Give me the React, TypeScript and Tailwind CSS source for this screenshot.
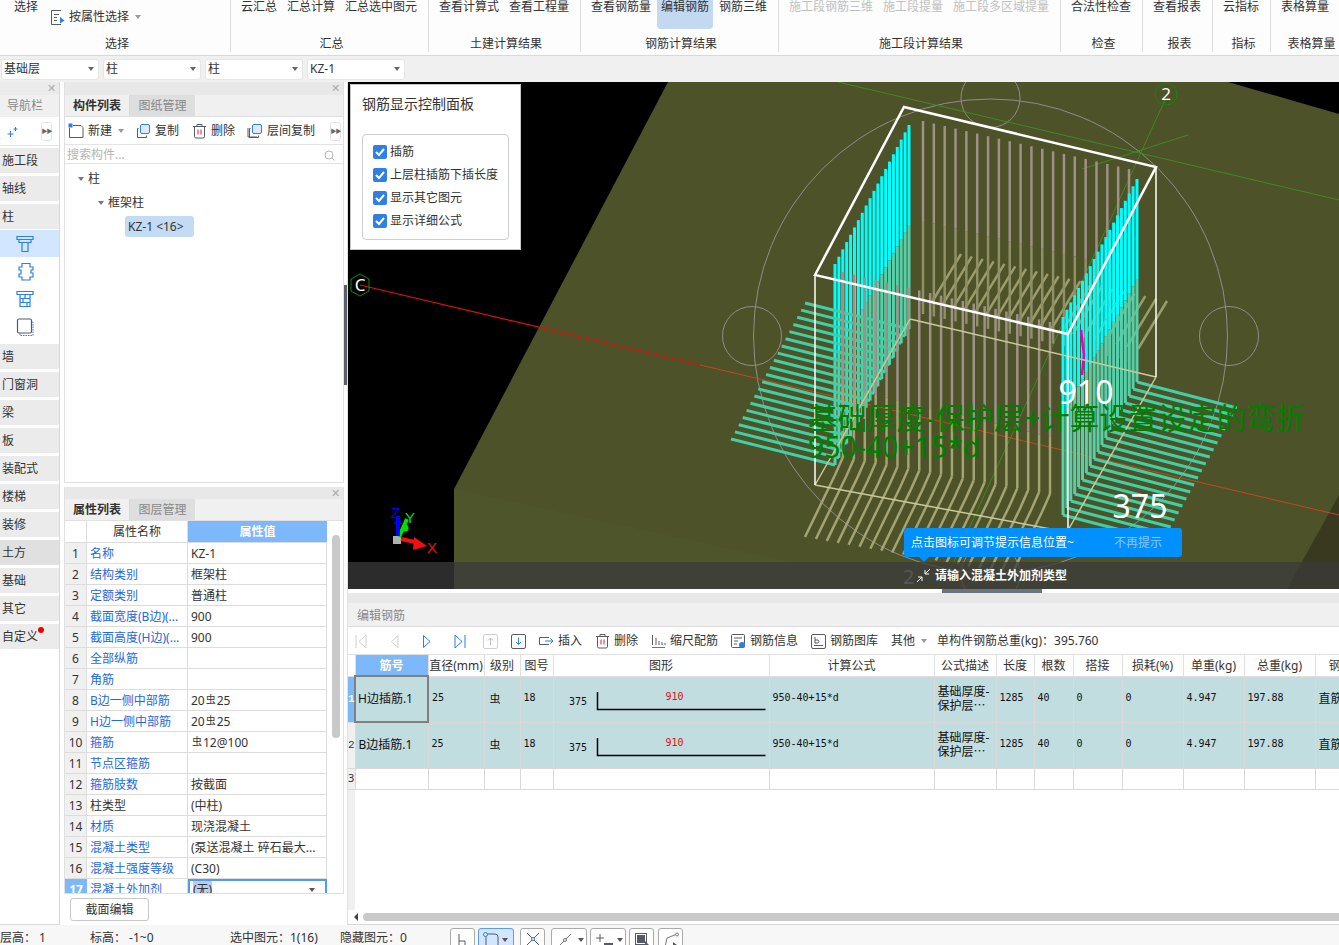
import React from 'react';

const ribbon = [
  { w: 'w-[231px]', label: '选择', pl: 'pl-[14px]', lp: 'pl-[4px]', items: [] as string[] },
  { w: 'w-[198px]', label: '汇总', pl: 'pl-[10px]', lp: 'pl-[4px]', items: ['云汇总', '汇总计算', '汇总选中图元'] },
  { w: 'w-[152px]', label: '土建计算结果', pl: 'pl-[10px]', lp: 'pl-[3px]', items: ['查看计算式', '查看工程量'] },
  { w: 'w-[198px]', label: '钢筋计算结果', pl: 'pl-[10px]', lp: 'pl-[3px]', items: ['查看钢筋量', '编辑钢筋', '钢筋三维'] },
  { w: 'w-[282px]', label: '施工段计算结果', pl: 'pl-[10px]', lp: 'pl-[3px]', items: ['施工段钢筋三维', '施工段提量', '施工段多区域提量'] },
  { w: 'w-[82px]', label: '检查', pl: 'pl-[10px]', lp: 'pl-[4px]', items: ['合法性检查'] },
  { w: 'w-[70px]', label: '报表', pl: 'pl-[10px]', lp: 'pl-[4px]', items: ['查看报表'] },
  { w: 'w-[58px]', label: '指标', pl: 'pl-[10px]', lp: 'pl-[4px]', items: ['云指标'] },
  { w: 'w-[68px]', label: '表格算量', pl: 'pl-[10px]', lp: 'pl-[13px]', items: ['表格算量'] },
];

const props: [string, string, boolean][] = [
  ['名称', 'KZ-1', true],
  ['结构类别', '框架柱', true],
  ['定额类别', '普通柱', true],
  ['截面宽度(B边)(...', '900', true],
  ['截面高度(H边)(...', '900', true],
  ['全部纵筋', '', true],
  ['角筋', '', true],
  ['B边一侧中部筋', '20虫25', true],
  ['H边一侧中部筋', '20虫25', true],
  ['箍筋', '虫12@100', true],
  ['节点区箍筋', '', true],
  ['箍筋肢数', '按截面', true],
  ['柱类型', '(中柱)', false],
  ['材质', '现浇混凝土', true],
  ['混凝土类型', '(泵送混凝土 碎石最大...', true],
  ['混凝土强度等级', '(C30)', true],
];

const navTop = ['施工段', '轴线', '柱'];
const navBottom = ['墙', '门窗洞', '梁', '板', '装配式', '楼梯', '装修', '土方', '基础', '其它', '自定义'];

const colW = [7, 73, 56, 36, 33, 216, 165, 62, 38, 39, 49, 61, 61, 71, 75];
const heads = ['', '筋号', '直径(mm)', '级别', '图号', '图形', '计算公式', '公式描述', '长度', '根数', '搭接', '损耗(%)', '单重(kg)', '总重(kg)', '钢筋归类'];

const lerp = (a: number, b: number, t: number) => a + (b - a) * t;
const idx = Array.from({ length: 20 }, (_, i) => i / 19);

function Caret({ className = 'border-t-[#777]' }: { className?: string }) {
  return <span className={`inline-block w-0 h-0 border-x-[3px] border-x-transparent border-t-[4px] ${className}`} />;
}

function More() {
  return (
    <span className="w-[11px] h-[19px] bg-white border border-[#e4e4e4] rounded-[3px] flex items-center justify-center text-[6px] text-[#666] tracking-[-1px]">
      ▶▶
    </span>
  );
}

function Ic({ children, w = 16, h = 16 }: { children: React.ReactNode; w?: number; h?: number }) {
  return (
    <svg width={w} height={h} viewBox={`0 0 ${w} ${h}`} fill="none" className="shrink-0">
      {children}
    </svg>
  );
}

function CopyIcon({ layered }: { layered?: boolean }) {
  return (
    <Ic>
      {layered && <path d="M1 5v9h9" stroke="#555b66" />}
      <path d="M3.500 5.500h-1v9h9v-2" stroke="#555b66" />
      <rect x="5.500" y="1.500" width="9" height="9" rx="1.500" fill="#dcebff" stroke="#2a7fe8" />
    </Ic>
  );
}

function TrashIcon() {
  return (
    <Ic w={15}>
      <path d="M1 3.500h13M5 3V1.500h5V3" stroke="#555b66" />
      <path d="M2.500 3.500v10a1.500 1.500 0 0 0 1.500 1.500h7a1.500 1.500 0 0 0 1.500-1.500v-10" stroke="#555b66" />
      <path d="M6 6.500v5M9 6.500v5" stroke="#e02020" />
    </Ic>
  );
}

function Sq({ label, dark }: { label: 'up' | 'down'; dark?: boolean }) {
  const c = dark ? '#555b66' : '#cfcfcf';
  return (
    <Ic w={15} h={15}>
      <rect x="0.500" y="0.500" width="14" height="14" rx="1.500" stroke={c} />
      {label === 'up' ? (
        <path d="M7.500 11V4M5 6.500 7.500 4 10 6.500" stroke="#bbb" />
      ) : (
        <path d="M7.500 3.500v7M5 8l2.500 2.500L10 8" stroke="#2a7fe8" />
      )}
    </Ic>
  );
}

function PropValue({ value }: { value: string }) {
  if (!value.includes('虫')) return <>{value}</>;
  const [a, b] = value.split('虫');
  return (
    <span>
      {a}
      <span className="text-[10px] px-[1px] align-[2px]">虫</span>
      {b}
    </span>
  );
}

function Scene() {
  return (
    <svg viewBox="348 82 991 507" width={991} height={507} className="block">
      <rect x="348" y="82" width="991" height="507" fill="#000" />
      <polygon points="668,82 1228,82 1339,114 1339,589 454,589 454,489" fill="#4d5229" />
      <polygon points="454,489 1339,680 1339,589 454,589" fill="#4f552b" />
      <polygon points="1339,495 1339,589 1287,589" fill="#38391f" />

      {/* grid */}
      <circle cx="990.500" cy="336" r="237" stroke="#8e8e8e" fill="none" />
      <circle cx="752" cy="336" r="29.500" stroke="#8e8e8e" fill="none" />
      <circle cx="1229" cy="336" r="29.500" stroke="#8e8e8e" fill="none" />
      <circle cx="990.500" cy="98" r="29.500" stroke="#8e8e8e" fill="none" />
      <circle cx="990.500" cy="574" r="29.500" stroke="#8e8e8e" fill="none" />
      <line x1="838" y1="82" x2="1339" y2="200" stroke="#3f8a22" />
      <line x1="1082" y1="169" x2="1188" y2="135" stroke="#3f8a22" />
      <line x1="1165" y1="100" x2="950" y2="570" stroke="#3f8a22" />
      <line x1="360" y1="285" x2="700" y2="365" stroke="#e01010" strokeWidth="1.200" />
      <line x1="700" y1="365" x2="1339" y2="515" stroke="#c8461e" />
      <polygon points="360,274 369,279 369,291 360,296 351,291 351,279" fill="none" stroke="#0a8a0a" />
      <text x="360" y="291" textAnchor="middle" fontSize="17" fill="#fff" fontFamily="Noto Sans">C</text>
      <circle cx="1166" cy="94" r="11" fill="none" stroke="#0a8a0a" />
      <text x="1166" y="100" textAnchor="middle" fontSize="17" fill="#fff" fontFamily="Noto Sans">2</text>

      {/* back bars */}
      {idx.map((t, i) => {
        const x = lerp(923, 1129, t);
        const top = lerp(121, 169, t);
        const mid = top + 100;
        const by = lerp(302, 349, t);
        return (
          <g key={i}>
            <line x1={x + 9} y1={by} x2={x + 38} y2={by - 48} stroke="#9c9c6c" strokeWidth="2.500" />
            <line x1={x} y1={mid} x2={x} y2={by + 12} stroke="#8f8f68" strokeWidth="2.500" />
            <line x1={x} y1={top} x2={x} y2={mid} stroke="#9f9088" strokeWidth="2.500" />
          </g>
        );
      })}

      {/* left cyan bars */}
      {idx.map((t, i) => {
        const x = lerp(835, 909, t);
        const top = lerp(264, 125, t);
        const mid = lerp(359, 225, t);
        const by = lerp(465, 329, t);
        return (
          <g key={i}>
            <line x1={x} y1={by} x2={x - 104} y2={by - 26} stroke="#3fd0a6" strokeWidth="3" />
            <line x1={x} y1={mid} x2={x} y2={by} stroke="#57cfa8" strokeWidth="3" />
            <line x1={x} y1={top} x2={x} y2={mid} stroke="#00ffff" strokeWidth="3" />
          </g>
        );
      })}

      {/* right feet */}
      {idx.map((t, i) => {
        const x = lerp(1063, 1137, t);
        const by = lerp(515, 382, t);
        return <line key={i} x1={x} y1={by} x2={x + 100} y2={by + 26} stroke="#3fd0a6" strokeWidth="3" />;
      })}

      {/* front bars */}
      {idx.map((t, i) => {
        const x = lerp(843, 1050, t);
        const top = lerp(272, 322, t);
        const mid = top + 115;
        const by = lerp(465, 502, t);
        return (
          <g key={i}>
            <path d={`M${x} ${by - 8} L${x - 8} ${by + 10} L${x - 38} ${by + 72}`} fill="none" stroke="#a3a373" strokeWidth="2.500" />
            <line x1={x} y1={mid} x2={x} y2={by - 8} stroke="#a3a373" strokeWidth="2.500" />
            <line x1={x} y1={top} x2={x} y2={mid} stroke="#9f9088" strokeWidth="2.500" />
          </g>
        );
      })}

      {/* right cyan bars */}
      {idx.map((t, i) => {
        const x = lerp(1063, 1137, t);
        const top = lerp(317, 179, t);
        const mid = lerp(415, 279, t);
        const by = lerp(515, 382, t);
        return (
          <g key={i}>
            <line x1={x} y1={mid} x2={x} y2={by} stroke="#57cfa8" strokeWidth="3" />
            <line x1={x} y1={top} x2={x} y2={mid} stroke="#00ffff" strokeWidth="3" />
          </g>
        );
      })}
      <path d="M1081 330l3 25-2 20" stroke="#e000d0" strokeWidth="2.500" fill="none" />

      {/* column box */}
      <path d="M815 485L1067 532M815 485L910 319M910 319L1156 377M1156 377L1067 532" stroke="#c9c99a" strokeWidth="1.500" fill="none" />
      <path d="M815 275V485M1156 167V377M1068 334V532" stroke="#fff" strokeWidth="1.500" fill="none" />
      <path d="M815 275L904 107L1156 167L1068 334Z" stroke="#fff" strokeWidth="2.500" fill="none" />

      <g fontFamily="Noto Sans, Noto Sans CJK SC">
        <text x="1086" y="404" textAnchor="middle" fontSize="32" fill="#fff">910</text>
        <text x="1140" y="518" textAnchor="middle" fontSize="32" fill="#fff">375</text>
        <text x="808" y="429" fontSize="30" fill="#008000" textLength={497} lengthAdjust="spacingAndGlyphs">基础厚度-保护层+计算设置设定的弯折</text>
        <text x="808" y="458" fontSize="30" fill="#008000" textLength={172} lengthAdjust="spacingAndGlyphs">950-40+15*d</text>
      </g>
      <text x="903" y="584" fontSize="20" fill="#a8a8a8" fontFamily="Noto Sans">2</text>

      {/* axis gizmo */}
      <g>
        <rect x="393" y="536" width="8" height="8" fill="#b0b0b0" />
        <path d="M399 537l8-18" stroke="#00e000" strokeWidth="4" />
        <circle cx="405" cy="528" r="3.500" fill="#00e000" />
        <path d="M398 536v-20" stroke="#0000ff" strokeWidth="4" />
        <path d="M398 517l-4.500 7h9z" fill="#0000ff" />
        <path d="M401 539l14 3" stroke="#f01010" strokeWidth="4" />
        <path d="M427 546l-14 4 1-13z" fill="#f01010" />
        <text x="391" y="518" fontSize="15" fill="#0000ff" fontFamily="Liberation Sans">Z</text>
        <text x="405" y="523" fontSize="15" fill="#00e000" fontFamily="Liberation Sans">Y</text>
        <text x="427" y="553" fontSize="15" fill="#f01010" fontFamily="Liberation Sans">X</text>
      </g>
    </svg>
  );
}

function ShapeCell() {
  return (
    <svg width={216} height={45} className="block">
      <g fontFamily="DejaVu Sans Mono" fontSize="10">
        <text x="15" y="28" fill="#111">375</text>
        <text x="120.500" y="23" textAnchor="middle" fill="#e01010">910</text>
      </g>
      <path d="M43.500 15V32.500H211.500" stroke="#000" strokeWidth="1.500" fill="none" />
    </svg>
  );
}

function RebarRow({ n, name, selected }: { n: number; name: string; selected?: boolean }) {
  const td = 'border-r border-b border-[#d9d9d9] px-[3px] align-middle overflow-hidden whitespace-nowrap';
  const mono = `${td} font-['DejaVu_Sans_Mono',monospace] text-[10px] pb-[3px]`;
  return (
    <tr className="h-[46px] bg-[#c1dde0] text-[#111]">
      <td className={`border-r border-b border-[#d9d9d9] text-center text-[11px] font-['Liberation_Mono',monospace] ${selected ? 'bg-[#7db8fa] text-white font-bold' : 'bg-[#f0f0f0] text-[#333]'}`}>
        {n}
      </td>
      <td className={selected ? 'border-2 border-[#808080] px-[2px] overflow-hidden whitespace-nowrap' : td}>{name}</td>
      <td className={mono}>25</td>
      <td className={`${td} pl-[5px] text-[11px]`}>虫</td>
      <td className={mono}>18</td>
      <td className="border-r border-b border-[#d9d9d9] p-0">
        <ShapeCell />
      </td>
      <td className={mono}>950-40+15*d</td>
      <td className="border-r border-b border-[#d9d9d9] pl-[3px] leading-[14px] overflow-hidden">
        <div className="whitespace-nowrap">基础厚度-</div>
        <div className="whitespace-nowrap">保护层⋯</div>
      </td>
      <td className={mono}>1285</td>
      <td className={mono}>40</td>
      <td className={mono}>0</td>
      <td className={mono}>0</td>
      <td className={mono}>4.947</td>
      <td className={mono}>197.88</td>
      <td className={td}>直筋</td>
    </tr>
  );
}

function Tool({ icon, label }: { icon: React.ReactNode; label: string }) {
  return (
    <span className="flex items-center gap-[4px] whitespace-nowrap">
      {icon}
      {label}
    </span>
  );
}

export default function App() {
  return (
    <div className="w-[1339px] h-[945px] overflow-hidden flex flex-col bg-white text-[12px] text-[#333] font-['Noto_Sans','Noto_Sans_CJK_SC',sans-serif]">
      {/* Ribbon */}
      <header className="h-[56px] shrink-0 flex bg-[#fdfdfd] border-b border-[#d9d9d9]">
        {ribbon.map((g) => (
          <section key={g.label} className={`${g.w} h-[52px] shrink-0 flex flex-col border-r border-[#dddddd] last:border-r-0`}>
            <div className={`h-[36px] flex gap-[10px] ${g.pl}`}>
              {g.label === '选择' ? (
                <>
                  <span className="leading-[13px]">选择</span>
                  <span className="flex items-center gap-[4px] h-[12px] mt-[11px] ml-[2px]">
                    <Ic w={15} h={15}>
                      <path d="M11 .5H1.500v14H11M4 4.500h5M4 7.500h3M4 10.500h3" stroke="#555b66" />
                      <path d="M10 7l4.500 3.500-4.500 3z" fill="#2a7fe8" />
                    </Ic>
                    按属性选择
                    <Caret className="border-t-[#999] ml-[2px]" />
                  </span>
                </>
              ) : (
                g.items.map((t) =>
                  t === '编辑钢筋' ? (
                    <span key={t} className="h-[29px] -mx-[4px] px-[4px] rounded-b-[4px] bg-[#c2d9f1] leading-[13px]">
                      {t}
                    </span>
                  ) : (
                    <span key={t} className={`leading-[13px] whitespace-nowrap ${t.startsWith('施工段') ? 'text-[#c0c0c0]' : ''}`}>
                      {t}
                    </span>
                  ),
                )
              )}
            </div>
            <div className={`h-[15px] leading-[15px] text-center whitespace-nowrap ${g.lp}`}>{g.label}</div>
          </section>
        ))}
      </header>

      {/* Combo bar */}
      <div className="h-[26px] shrink-0 flex items-center gap-[4px] pl-[1px] bg-[#f0f0f0]">
        {['基础层', '柱', '柱', 'KZ-1'].map((t, i) => (
          <div key={i} className="w-[98px] h-[21px] flex items-center justify-between pl-[2px] pr-[4px] bg-white border border-[#e6e6e6] rounded-[3px]">
            {t}
            <Caret className="border-t-[#666]" />
          </div>
        ))}
      </div>

      {/* Main */}
      <div className="h-[843px] shrink-0 flex">
        {/* Nav */}
        <nav className="w-[60px] shrink-0 flex flex-col border-r border-[#d8d8d8] border-b">
          <div className="h-[13px] bg-[#ebebeb] flex justify-end items-center pr-[3px] text-[11px] text-[#aaa]">✕</div>
          <div className="h-[22px] pl-[7px] pb-[1px] flex items-center bg-[#f0f0f0] text-[#888]">导航栏</div>
          <div className="h-[29px] flex items-center justify-between pl-[7px] pr-[7px] border-b border-[#e4e4e4]">
            <Ic w={11} h={11}>
              <path d="M3.500 5v6M.5 8h6M8.500 1v4M6.500 3h4" stroke="#2a7fe8" />
            </Ic>
            <More />
          </div>
          <div className="flex flex-col gap-[3px] pt-[2px]">
            {navTop.map((t) => (
              <div key={t} className="h-[25px] pl-[2px] flex items-center bg-[#ebebeb]">{t}</div>
            ))}
          </div>
          <div className="flex flex-col mb-[3px]">
            <div className="h-[27px] mt-[1px] pr-[10px] flex items-center justify-center bg-[#d2e6ff]">
              <Ic w={18} h={18}>
                <path d="M1 1.500h16v3H1zM3 4.500h12v3H3zM6 7.500h6v9H6z" stroke="#2a7fe8" strokeWidth="1.200" />
              </Ic>
            </div>
            <div className="h-[28px] pr-[10px] flex items-center justify-center">
              <Ic w={18} h={19}>
                <path d="M6 5V1.500h8V5h3v3h-2v3h2v4h-3v3H6v-3H3v-3h2V8H3V5z" stroke="#2a7fe8" strokeWidth="1.200" />
              </Ic>
            </div>
            <div className="h-[28px] pr-[10px] flex items-center justify-center">
              <Ic w={18} h={18}>
                <path d="M1 1.500h16v3H1zM4 4.500h10v12H4zM4 8.500h10M4 12.500h10M9 4.500v4M7 8.500v4M11 12.500v4" stroke="#2a7fe8" strokeWidth="1.200" />
              </Ic>
            </div>
            <div className="h-[28px] pr-[10px] flex items-center justify-center">
              <Ic w={18} h={18}>
                <path d="M14 4h3v13.500H4v-3" stroke="#2a7fe8" strokeDasharray="1.500 1" />
                <rect x="1.500" y="1" width="14" height="14" rx="1.500" fill="#fff" stroke="#555b66" strokeWidth="1.200" />
              </Ic>
            </div>
          </div>
          <div className="flex flex-col gap-[3px]">
            {navBottom.map((t) => (
              <div key={t} className={`relative h-[25px] pl-[2px] flex items-center ${t === '土方' ? 'bg-[#e0e0e0]' : 'bg-[#ebebeb]'}`}>
                {t}
                {t === '自定义' && <span className="absolute left-[38px] top-[3px] w-[6px] h-[6px] rounded-full bg-[#f00000]" />}
              </div>
            ))}
          </div>
        </nav>

        {/* Component panels */}
        <div className="relative w-[287px] shrink-0 flex flex-col pl-[4px] pr-[3px]">
          <div className="absolute right-0 top-[203px] w-[3px] h-[100px] bg-[#5b6068]" />
          <div className="h-[401px] shrink-0 flex flex-col border border-t-0 border-[#e0e0e0]">
            <div className="h-[13px] bg-[#e8e8e8] flex justify-end items-center pr-[3px] text-[11px] text-[#aaa]">✕</div>
            <div className="h-[22px] flex bg-[#f0f0f0] border-b border-[#e0e0e0]">
              <span className="w-[65px] flex items-center justify-center font-bold border-r border-[#d8d8d8]">构件列表</span>
              <span className="w-[65px] flex items-center justify-center text-[#888] bg-[#dedede]">图纸管理</span>
            </div>
            <div className="h-[28px] flex items-center pl-[3px] pr-[2px] pt-[1px] border-b border-[#e4e4e4]">
              <Tool icon={<Ic><path d="M5 2.500h8l2 2v10H1.500V5" stroke="#555b66" /><rect x="0.500" y="0.500" width="4" height="4" fill="#2a7fe8" /></Ic>} label="新建" />
              <Caret className="border-t-[#999] ml-[6px]" />
              <span className="ml-[11px]"><Tool icon={<CopyIcon />} label="复制" /></span>
              <span className="ml-[13px]"><Tool icon={<TrashIcon />} label="删除" /></span>
              <span className="ml-[12px]"><Tool icon={<CopyIcon layered />} label="层间复制" /></span>
              <span className="ml-auto"><More /></span>
            </div>
            <div className="h-[19px] flex items-center justify-between pl-[2px] pr-[8px] pt-[2px] text-[#b5b5b5] border-b border-[#e4e4e4]">
              搜索构件...
              <Ic w={11} h={11}>
                <circle cx="5" cy="5" r="4" stroke="#b5b5b5" />
                <path d="M8 8l2.500 2.500" stroke="#b5b5b5" />
              </Ic>
            </div>
            <div className="flex flex-col pt-[7px]">
              <div className="h-[16px] flex items-center gap-[4px] pl-[13px]">
                <Caret className="border-t-[#777]" />柱
              </div>
              <div className="h-[16px] mt-[8px] flex items-center gap-[4px] pl-[33px]">
                <Caret className="border-t-[#777]" />框架柱
              </div>
              <div className="mt-[5px] ml-[60px] w-[69px] h-[21px] pl-[3px] flex items-center rounded-[3px] bg-[#c4dcf3]">KZ-1&nbsp;&lt;16&gt;</div>
            </div>
          </div>

          <div className="h-[407px] shrink-0 mt-[4px] flex flex-col border border-t-0 border-[#e0e0e0] overflow-hidden">
            <div className="h-[12px] shrink-0 bg-[#e8e8e8] flex justify-end items-center pr-[3px] text-[11px] text-[#aaa]">✕</div>
            <div className="h-[22px] shrink-0 flex bg-[#f0f0f0] border-b border-[#e0e0e0]">
              <span className="w-[65px] flex items-center justify-center font-bold border-r border-[#d8d8d8]">属性列表</span>
              <span className="w-[65px] flex items-center justify-center text-[#888] bg-[#dedede]">图层管理</span>
            </div>
            <div className="flex">
              <div className="w-[262px] shrink-0 flex flex-col">
                <div className="h-[22px] shrink-0 flex border-b border-[#dcdcdc]">
                  <span className="w-[22px] border-r border-[#dcdcdc]" />
                  <span className="w-[101px] pt-[1px] flex items-center justify-center border-r border-[#dcdcdc]">属性名称</span>
                  <span className="flex-1 pt-[1px] flex items-center justify-center bg-[#7db8fa] text-white font-bold">属性值</span>
                </div>
                {props.map(([name, value, link], i) => (
                  <div key={name} className="h-[21px] shrink-0 flex border-b border-[#dcdcdc]">
                    <span className="w-[22px] pt-[1px] bg-[#f0f0f0] border-r border-[#dcdcdc] flex items-center justify-center">{i + 1}</span>
                    <span className={`w-[101px] pl-[3px] pt-[1px] flex items-center whitespace-nowrap overflow-hidden border-r border-[#dcdcdc] ${link ? 'text-[#2468e0]' : ''}`}>{name}</span>
                    <span className="flex-1 pl-[3px] pt-[1px] flex items-center whitespace-nowrap overflow-hidden border-r border-[#dcdcdc]">
                      <PropValue value={value} />
                    </span>
                  </div>
                ))}
                <div className="h-[21px] shrink-0 flex">
                  <span className="w-[22px] bg-[#7db8fa] text-white font-bold flex items-center justify-center">17</span>
                  <span className="w-[101px] pl-[3px] flex items-center text-[#2468e0] border-r border-[#dcdcdc] whitespace-nowrap">混凝土外加剂</span>
                  <span className="flex-1 pl-[3px] flex items-center justify-between pr-[10px] border-2 border-[#4d9cf0]">
                    <span className="bg-[#b9cdf0]">(无)</span>
                    <Caret className="border-t-[#555]" />
                  </span>
                </div>
              </div>
              <div className="flex-1 pl-[5px] pt-[14px]">
                <div className="w-[8px] h-[203px] rounded-[4px] bg-[#c9c9c9]" />
              </div>
            </div>
          </div>

          <div className="pl-[6px] pt-[4px]">
            <button className="w-[79px] h-[23px] flex items-center justify-center bg-white border border-[#c8c8c8] rounded-[3px]">截面编辑</button>
          </div>
        </div>

        {/* Right */}
        <div className="relative w-[992px] shrink-0 flex flex-col overflow-hidden border-l border-[#e0e0e0] border-b border-b-[#d8d8d8]">
          <div className="relative h-[507px] shrink-0">
            <Scene />
            <div className="absolute left-[2px] top-[2px] w-[171px] h-[166px] bg-white border border-[#c8c8c8] pt-[9px] pl-[11px]">
              <div className="text-[14px] leading-[20px]">钢筋显示控制面板</div>
              <div className="mt-[20px] w-[147px] h-[106px] border border-[#cfcfcf] rounded-[4px] flex flex-col pl-[10px] pt-[10px] gap-[9px]">
                {['插筋', '上层柱插筋下插长度', '显示其它图元', '显示详细公式'].map((t) => (
                  <label key={t} className="h-[14px] flex items-center gap-[3px] whitespace-nowrap">
                    <span className="w-[14px] h-[14px] rounded-[2px] bg-[#2f7fe6] flex items-center justify-center">
                      <Ic w={10} h={10}>
                        <path d="M1 5l3 3 5-6" stroke="#fff" strokeWidth="2" />
                      </Ic>
                    </span>
                    {t}
                  </label>
                ))}
              </div>
            </div>
            <div className="absolute left-0 right-0 bottom-0 h-[27px] bg-[#3b3b3b]/75 flex items-center pl-[568px] gap-[4px] text-white font-bold">
              <Ic w={15} h={15}>
                <path d="M14 1L9 6M9 2v4h4M1 14l5-5M6 13V9H2" stroke="#fff" />
              </Ic>
              请输入混凝土外加剂类型
            </div>
            <div className="absolute left-[556px] top-[446px] w-[278px] h-[29px] rounded-[3px] bg-[#0090ff] flex items-center justify-between pl-[7px] pr-[20px] text-white">
              点击图标可调节提示信息位置~
              <span className="text-[#8cc8ff]">不再提示</span>
              <span className="absolute left-[15px] -bottom-[5px] w-0 h-0 border-x-[5px] border-x-transparent border-t-[5px] border-t-[#0090ff]" />
            </div>
          </div>

          <div className="relative h-[14px] shrink-0 border-t-[4px] border-white bg-[#e8e8e8]">
            <div className="absolute left-[594px] -top-[4px] w-[100px] h-[4px] bg-[#6b7280]" />
          </div>

          <div className="h-[24px] shrink-0 flex items-center pl-[9px] pt-[2px] bg-[#f0f0f0] text-[#888] border-b border-[#dedede]">编辑钢筋</div>

          <div className="h-[28px] shrink-0 flex items-center pl-[7px] pt-[1px] border-b border-[#e0e0e0] whitespace-nowrap">
            <Ic w={12} h={15}><path d="M1 1v13M11 1L4 7.500 11 14z" stroke="#cfcfcf" /></Ic>
            <span className="ml-[23px]"><Ic w={10} h={15}><path d="M8 1.500L1.500 7.500 8 13.500z" stroke="#cfcfcf" /></Ic></span>
            <span className="ml-[22px]"><Ic w={10} h={15}><path d="M1.500 1.500L8 7.500 1.500 13.500z" stroke="#2a7fe8" /></Ic></span>
            <span className="ml-[22px]"><Ic w={12} h={15}><path d="M11 1v13M1 1l7 6.500L1 14z" stroke="#2a7fe8" /></Ic></span>
            <span className="ml-[17px]"><Sq label="up" /></span>
            <span className="ml-[13px]"><Sq label="down" dark /></span>
            <span className="ml-[12px]">
              <Tool icon={<Ic w={16} h={15}><path d="M11 3.500H1.500v7H11" stroke="#555b66" /><path d="M7 7h8M12.500 4.500L15 7l-2.500 2.500" stroke="#2a7fe8" /></Ic>} label="插入" />
            </span>
            <span className="ml-[13px]"><Tool icon={<TrashIcon />} label="删除" /></span>
            <span className="ml-[13px]">
              <Tool icon={<Ic w={15} h={15}><path d="M1.500 1v10M5 4v7M8 7v4M11 8v3M14 9v2" stroke="#555b66" /><path d="M1 13.500h13" stroke="#2a7fe8" /></Ic>} label="缩尺配筋" />
            </span>
            <span className="ml-[13px]">
              <Tool icon={<Ic w={15} h={15}><rect x="0.500" y="0.500" width="13" height="13" rx="1" stroke="#555b66" /><path d="M3 4h8M3 7h4M3 10h3" stroke="#555b66" /><circle cx="11" cy="11" r="3" fill="#2a7fe8" /></Ic>} label="钢筋信息" />
            </span>
            <span className="ml-[13px]">
              <Tool icon={<Ic w={15} h={15}><rect x="0.500" y="0.500" width="14" height="14" rx="1.500" stroke="#555b66" /><path d="M4 3v6h3a2 2 0 0 0 0-3H4M3 11.500h9" stroke="#555b66" /></Ic>} label="钢筋图库" />
            </span>
            <span className="ml-[13px]">其他</span>
            <Caret className="border-t-[#999] ml-[6px]" />
            <span className="ml-[10px]">单构件钢筋总重(kg)：395.760</span>
          </div>

          <div className="flex-1 relative overflow-hidden">
            <div className="absolute left-0 top-0 bottom-0 w-[7px] bg-[#f0f0f0]" />
            <table className="relative table-fixed border-collapse w-[1042px]">
              <colgroup>
                {colW.map((w, i) => (
                  <col key={i} width={w} />
                ))}
              </colgroup>
              <thead>
                <tr className="h-[21px]">
                  {heads.map((h, i) => (
                    <th key={i} className={`border-r border-b border-[#e0e0e0] pt-[1px] whitespace-nowrap overflow-hidden ${h === '筋号' ? 'bg-[#7db8fa] text-white font-bold' : 'bg-white font-normal'}`}>
                      {h}
                    </th>
                  ))}
                </tr>
              </thead>
              <tbody>
                <RebarRow n={1} name="H边插筋.1" selected />
                <RebarRow n={2} name="B边插筋.1" />
                <tr className="h-[21px] bg-white">
                  {heads.map((_, i) => (
                    <td key={i} className={`border-r border-b border-[#d9d9d9] text-[11px] text-center ${i === 0 ? 'bg-[#f0f0f0]' : ''}`}>
                      {i === 0 ? 3 : ''}
                    </td>
                  ))}
                </tr>
              </tbody>
            </table>
          </div>

          <div className="h-[14px] shrink-0 flex items-center pl-[6px] gap-[5px]">
            <span className="w-0 h-0 border-y-[4px] border-y-transparent border-r-[4px] border-r-[#444]" />
            <div className="flex-1 h-[8px] rounded-l-[4px] bg-[#c9c9c9]" />
          </div>
        </div>
      </div>

      {/* Status bar */}
      <footer className="h-[20px] shrink-0 flex items-start bg-[#f7f7f7] whitespace-nowrap overflow-hidden">
        <span className="w-[90px] pt-[6px] leading-[14px]">层高： 1</span>
        <span className="w-[140px] pt-[6px] leading-[14px]">标高： -1~0</span>
        <span className="w-[110px] pt-[6px] leading-[14px]">选中图元：1(16)</span>
        <span className="w-[110px] pt-[6px] leading-[14px]">隐藏图元：0</span>
        <div className="flex gap-[3px] pt-[3px]">
          <span className="w-[25px] h-[24px] border border-[#aaa] rounded-[3px] bg-white flex justify-center pt-[4px]">
            <Ic w={12} h={14}><path d="M2 1v13M2 8h6v6" stroke="#555b66" /></Ic>
          </span>
          <span className="w-[36px] h-[24px] border border-[#5a9cf0] rounded-[3px] bg-[#d2e6ff] flex items-start gap-[3px] pl-[4px] pt-[3px]">
            <Ic w={16} h={16}><path d="M3 2h9a3 3 0 0 1 3 3v11M3 2v14" stroke="#555b66" /><circle cx="2.500" cy="2.500" r="2" fill="#d2e6ff" stroke="#2a7fe8" /></Ic>
            <span className="pt-[6px] flex"><Caret className="border-t-[#555]" /></span>
          </span>
          <span className="ml-[3px] w-[25px] h-[24px] border border-[#aaa] rounded-[3px] bg-white flex justify-center pt-[2px]">
            <Ic w={16} h={16}><path d="M2 2l12 12M14 2L2 14" stroke="#555b66" /><circle cx="8" cy="8" r="1.500" fill="#fff" stroke="#2a7fe8" /></Ic>
          </span>
          <span className="ml-[3px] w-[36px] h-[24px] border border-[#aaa] rounded-[3px] bg-white flex items-start gap-[6px] pl-[6px] pt-[4px]">
            <Ic w={14} h={14}><path d="M1 13l12-12" stroke="#777" /><circle cx="7" cy="7" r="1.500" fill="#fff" stroke="#777" /></Ic>
            <span className="pt-[5px] flex"><Caret className="border-t-[#555]" /></span>
          </span>
          <span className="w-[36px] h-[24px] border border-[#aaa] rounded-[3px] bg-white flex items-start gap-[4px] pl-[5px] pt-[4px]">
            <Ic w={17} h={14}><path d="M4 1v8M0 5h8" stroke="#555b66" /><rect x="8" y="10" width="9" height="4" fill="#555b66" /></Ic>
            <span className="pt-[5px] flex"><Caret className="border-t-[#555]" /></span>
          </span>
          <span className="w-[25px] h-[24px] border border-[#aaa] rounded-[3px] bg-white flex justify-center pt-[3px]">
            <Ic w={16} h={16}><rect x="1.500" y="1.500" width="11" height="11" stroke="#555b66" /><rect x="3" y="3" width="8" height="8" fill="#555b66" /><path d="M11 9l4 4-4 3z" fill="#555b66" /></Ic>
          </span>
          <span className="ml-[1px] w-[25px] h-[24px] border border-[#aaa] rounded-[3px] bg-white flex justify-center pt-[3px]">
            <Ic w={16} h={16}><path d="M2 15l2-9 10-4" stroke="#777" /><circle cx="14" cy="2.500" r="1.500" fill="#fff" stroke="#777" /><path d="M10 10l4 3-4 3z" fill="#555b66" /></Ic>
          </span>
        </div>
      </footer>
    </div>
  );
}
